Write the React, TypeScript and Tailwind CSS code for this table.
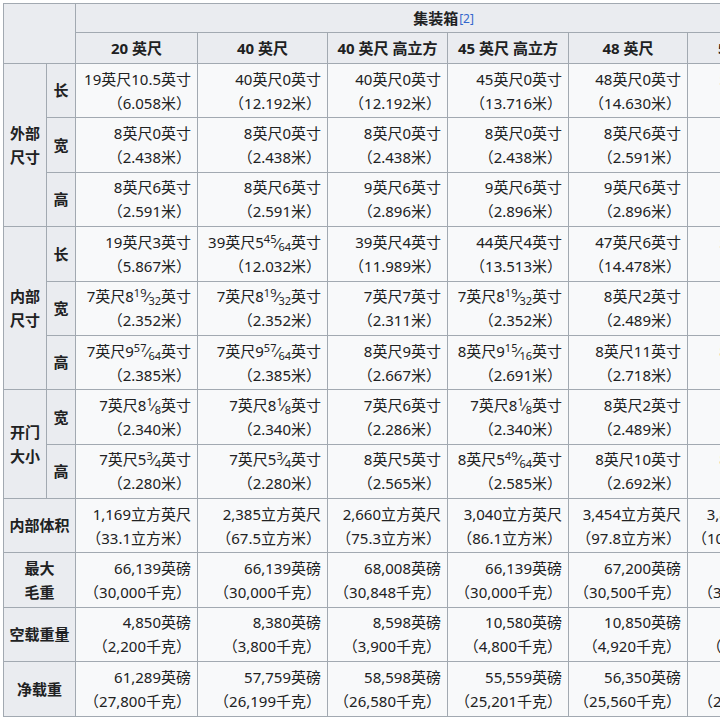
import React from "react";

const F = ({ n, d }: { n: string; d: string }) => (
  <>
    <span className="text-[11px] leading-none relative -top-[5px]">{n}</span>
    <span>⁄</span>
    <span className="text-[11px] leading-none relative top-[3px]">{d}</span>
  </>
);

type Cell = [React.ReactNode, string];

const TH = "border border-[#a2a9b1] bg-[#eaecf0] font-bold text-center align-middle px-[4px]";
const TD = "border border-[#a2a9b1] bg-[#f8f9fa] text-right align-middle pl-[4px] pr-[6px] py-[2.7px] leading-[24px] whitespace-nowrap";

const Row = ({ cells }: { cells: Cell[] }) => (
  <>
    {cells.map((c, i) => (
      <td key={i} className={TD}>
        {c[0]}
        <br />
        {c[1]}
      </td>
    ))}
  </>
);

const outerLen: Cell[] = [
  ["19英尺10.5英寸", "（6.058米）"],
  ["40英尺0英寸", "（12.192米）"],
  ["40英尺0英寸", "（12.192米）"],
  ["45英尺0英寸", "（13.716米）"],
  ["48英尺0英寸", "（14.630米）"],
  ["53英尺0英寸", "（16.154米）"],
];
const outerW: Cell[] = [
  ["8英尺0英寸", "（2.438米）"],
  ["8英尺0英寸", "（2.438米）"],
  ["8英尺0英寸", "（2.438米）"],
  ["8英尺0英寸", "（2.438米）"],
  ["8英尺6英寸", "（2.591米）"],
  ["8英尺6英寸", "（2.591米）"],
];
const outerH: Cell[] = [
  ["8英尺6英寸", "（2.591米）"],
  ["8英尺6英寸", "（2.591米）"],
  ["9英尺6英寸", "（2.896米）"],
  ["9英尺6英寸", "（2.896米）"],
  ["9英尺6英寸", "（2.896米）"],
  ["9英尺6英寸", "（2.896米）"],
];
const innerLen: Cell[] = [
  ["19英尺3英寸", "（5.867米）"],
  [<>39英尺5<F n="45" d="64" />英寸</>, "（12.032米）"],
  ["39英尺4英寸", "（11.989米）"],
  ["44英尺4英寸", "（13.513米）"],
  ["47英尺6英寸", "（14.478米）"],
  ["52英尺6英寸", "（16.002米）"],
];
const innerW: Cell[] = [
  [<>7英尺8<F n="19" d="32" />英寸</>, "（2.352米）"],
  [<>7英尺8<F n="19" d="32" />英寸</>, "（2.352米）"],
  ["7英尺7英寸", "（2.311米）"],
  [<>7英尺8<F n="19" d="32" />英寸</>, "（2.352米）"],
  ["8英尺2英寸", "（2.489米）"],
  ["8英尺2英寸", "（2.489米）"],
];
const innerH: Cell[] = [
  [<>7英尺9<F n="57" d="64" />英寸</>, "（2.385米）"],
  [<>7英尺9<F n="57" d="64" />英寸</>, "（2.385米）"],
  ["8英尺9英寸", "（2.667米）"],
  [<>8英尺9<F n="15" d="16" />英寸</>, "（2.691米）"],
  ["8英尺11英寸", "（2.718米）"],
  ["8英尺11英寸", "（2.718米）"],
];
const doorW: Cell[] = [
  [<>7英尺8<F n="1" d="8" />英寸</>, "（2.340米）"],
  [<>7英尺8<F n="1" d="8" />英寸</>, "（2.340米）"],
  ["7英尺6英寸", "（2.286米）"],
  [<>7英尺8<F n="1" d="8" />英寸</>, "（2.340米）"],
  ["8英尺2英寸", "（2.489米）"],
  ["8英尺2英寸", "（2.489米）"],
];
const doorH: Cell[] = [
  [<>7英尺5<F n="3" d="4" />英寸</>, "（2.280米）"],
  [<>7英尺5<F n="3" d="4" />英寸</>, "（2.280米）"],
  ["8英尺5英寸", "（2.565米）"],
  [<>8英尺5<F n="49" d="64" />英寸</>, "（2.585米）"],
  ["8英尺10英寸", "（2.692米）"],
  ["8英尺10英寸", "（2.692米）"],
];
const volume: Cell[] = [
  ["1,169立方英尺", "（33.1立方米）"],
  ["2,385立方英尺", "（67.5立方米）"],
  ["2,660立方英尺", "（75.3立方米）"],
  ["3,040立方英尺", "（86.1立方米）"],
  ["3,454立方英尺", "（97.8立方米）"],
  ["3,857立方英尺", "（109.2立方米）"],
];
const gross: Cell[] = [
  ["66,139英磅", "（30,000千克）"],
  ["66,139英磅", "（30,000千克）"],
  ["68,008英磅", "（30,848千克）"],
  ["66,139英磅", "（30,000千克）"],
  ["67,200英磅", "（30,500千克）"],
  ["67,200英磅", "（30,480千克）"],
];
const tare: Cell[] = [
  ["4,850英磅", "（2,200千克）"],
  ["8,380英磅", "（3,800千克）"],
  ["8,598英磅", "（3,900千克）"],
  ["10,580英磅", "（4,800千克）"],
  ["10,850英磅", "（4,920千克）"],
  ["11,110英磅", "（5,040千克）"],
];
const net: Cell[] = [
  ["61,289英磅", "（27,800千克）"],
  ["57,759英磅", "（26,199千克）"],
  ["58,598英磅", "（26,580千克）"],
  ["55,559英磅", "（25,201千克）"],
  ["56,350英磅", "（25,560千克）"],
  ["56,090英磅", "（25,440千克）"],
];

const heads = ["20 英尺", "40 英尺", "40 英尺 高立方", "45 英尺 高立方", "48 英尺"];

export default function App() {
  return (
    <div className="w-[720px] h-[721px] overflow-hidden bg-white pl-[3px] pt-[3px] text-[15px] text-[#202122] font-['Noto_Sans','Noto_Sans_CJK_SC',sans-serif]">
      <table className="table-fixed border-collapse w-[809px] border border-[#a2a9b1] bg-[#f8f9fa]">
        <colgroup>
          <col className="w-[43px]" />
          <col className="w-[29px]" />
          <col className="w-[122px]" />
          <col className="w-[130px]" />
          <col className="w-[120px]" />
          <col className="w-[121px]" />
          <col className="w-[119px]" />
          <col className="w-[124px]" />
        </colgroup>
        <thead>
          <tr>
            <th rowSpan={2} colSpan={2} className={TH}></th>
            <th colSpan={6} className={`${TH} leading-[24px] py-[2px]`}>
              集装箱
              <sup className="text-[12px] font-normal text-[#3366cc] relative -top-[1px] ml-[1px]">[2]</sup>
            </th>
          </tr>
          <tr>
            {heads.map((h) => (
              <th key={h} className={`${TH} leading-[24px] py-[3px] whitespace-nowrap`}>
                {h}
              </th>
            ))}
            <th className="border border-[#a2a9b1] bg-[#eaecf0] font-bold text-left align-middle leading-[24px] py-[3px] pl-[30px] whitespace-nowrap overflow-hidden">
              53 英尺 高立方
            </th>
          </tr>
        </thead>
        <tbody>
          <tr>
            <th rowSpan={3} className={`${TH} leading-[24px]`}>外部<br />尺寸</th>
            <th className={TH}>长</th>
            <Row cells={outerLen} />
          </tr>
          <tr>
            <th className={TH}>宽</th>
            <Row cells={outerW} />
          </tr>
          <tr>
            <th className={TH}>高</th>
            <Row cells={outerH} />
          </tr>
          <tr>
            <th rowSpan={3} className={`${TH} leading-[24px]`}>内部<br />尺寸</th>
            <th className={TH}>长</th>
            <Row cells={innerLen} />
          </tr>
          <tr>
            <th className={TH}>宽</th>
            <Row cells={innerW} />
          </tr>
          <tr>
            <th className={TH}>高</th>
            <Row cells={innerH} />
          </tr>
          <tr>
            <th rowSpan={2} className={`${TH} leading-[24px]`}>开门<br />大小</th>
            <th className={TH}>宽</th>
            <Row cells={doorW} />
          </tr>
          <tr>
            <th className={TH}>高</th>
            <Row cells={doorH} />
          </tr>
          <tr>
            <th colSpan={2} className={TH}>内部体积</th>
            <Row cells={volume} />
          </tr>
          <tr>
            <th colSpan={2} className={`${TH} leading-[24px]`}>最大<br />毛重</th>
            <Row cells={gross} />
          </tr>
          <tr>
            <th colSpan={2} className={TH}>空载重量</th>
            <Row cells={tare} />
          </tr>
          <tr>
            <th colSpan={2} className={TH}>净载重</th>
            <Row cells={net} />
          </tr>
        </tbody>
      </table>
    </div>
  );
}
